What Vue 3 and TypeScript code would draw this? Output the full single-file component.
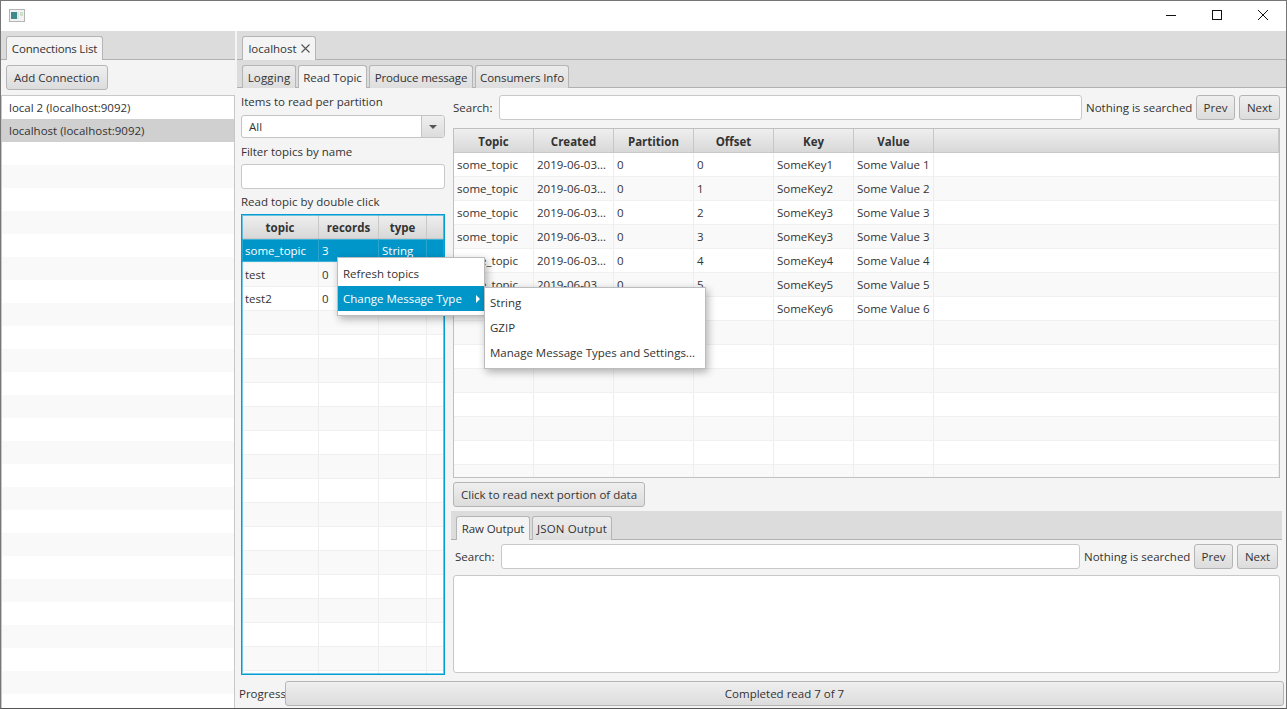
<script setup lang="ts">
interface Row {
  cells: string[]
  selected?: boolean
}

const connections = ['local 2 (localhost:9092)', 'localhost (localhost:9092)']
const emptyConnections = Array.from({ length: 25 }, (_, i) => i)

const topicRows: Row[] = [
  { cells: ['some_topic', '3', 'String', ''], selected: true },
  { cells: ['test', '0', '', ''] },
  { cells: ['test2', '0', '', ''] },
  ...Array.from({ length: 16 }, () => ({ cells: ['', '', '', ''] }))
]

const messages = [
  ['SomeKey1', 'Some Value 1'],
  ['SomeKey2', 'Some Value 2'],
  ['SomeKey3', 'Some Value 3'],
  ['SomeKey3', 'Some Value 3'],
  ['SomeKey4', 'Some Value 4'],
  ['SomeKey5', 'Some Value 5'],
  ['SomeKey6', 'Some Value 6']
]

const messageRows: string[][] = [
  ...messages.map((m, i) => ['some_topic', '2019-06-03...', '0', String(i), m[0], m[1], '']),
  ...Array.from({ length: 7 }, () => ['', '', '', '', '', '', ''])
]

const topicHeaders = ['topic', 'records', 'type', '']
const messageHeaders = ['Topic', 'Created', 'Partition', 'Offset', 'Key', 'Value', '']
const mainTabs = ['Logging', 'Read Topic', 'Produce message', 'Consumers Info']
</script>

<template>
  <div class="window">
    <div class="titlebar">
      <svg class="app-icon" width="16" height="13" viewBox="0 0 16 13">
        <rect x="0.5" y="0.5" width="15" height="12" fill="#f2f2f2" stroke="#b4b4b4" />
        <rect x="2" y="3" width="6" height="7" fill="#3f8a8c" />
        <rect x="8" y="3" width="2" height="7" fill="#dfe6ea" />
        <rect x="11" y="3" width="3" height="4" fill="#cfe0c8" />
      </svg>
      <div class="win-controls">
        <svg width="12" height="12" viewBox="0 0 12 12"><path d="M1 6.5h10" stroke="#111" fill="none" /></svg>
        <svg width="12" height="12" viewBox="0 0 12 12"><rect x="1.5" y="1.5" width="9" height="9" stroke="#111" fill="none" /></svg>
        <svg width="12" height="12" viewBox="0 0 12 12"><path d="M1 1l10 10M11 1L1 11" stroke="#111" fill="none" /></svg>
      </div>
    </div>

    <div class="body">
      <aside class="left-pane">
        <div class="tab-header">
          <div class="tab active conn-tab">Connections List</div>
        </div>
        <div class="left-tools">
          <button class="btn">Add Connection</button>
        </div>
        <div class="conn-list">
          <div
            v-for="(c, i) in connections"
            :key="c"
            class="conn-row"
            :class="{ selected: i === 1 }"
          >{{ c }}</div>
          <div v-for="i in emptyConnections" :key="i" class="conn-row" :class="{ alt: i % 2 === 1 }"></div>
        </div>
      </aside>

      <main class="right-pane">
        <div class="tab-header">
          <div class="tab active closable">
            localhost
            <svg class="close" width="9" height="9" viewBox="0 0 9 9"><path d="M0.5 0.5l8 8M8.5 0.5l-8 8" stroke="#555" stroke-width="1.1" fill="none" /></svg>
          </div>
        </div>
        <div class="tab-header sub">
          <div v-for="t in mainTabs" :key="t" class="tab" :class="{ active: t === 'Read Topic' }">{{ t }}</div>
        </div>

        <div class="content">
          <section class="topics-col">
            <label class="field-label first">Items to read per partition</label>
            <div class="combo">
              <span class="combo-value">All</span>
              <span class="combo-arrow"><i></i></span>
            </div>
            <label class="field-label">Filter topics by name</label>
            <input class="text-input" type="text" />
            <label class="field-label last">Read topic by double click</label>

            <div class="table focused">
              <div class="thead topic-grid">
                <div v-for="(h, i) in topicHeaders" :key="i" class="th">{{ h }}</div>
              </div>
              <div
                v-for="(r, i) in topicRows"
                :key="i"
                class="tr topic-grid"
                :class="{ alt: i % 2 === 1, selected: r.selected }"
              >
                <div v-for="(c, j) in r.cells" :key="j" class="td">{{ c }}</div>
              </div>
            </div>
          </section>

          <section class="messages-col">
            <div class="search-row">
              <span class="search-label">Search:</span>
              <input class="text-input grow" type="text" />
              <span class="search-status">Nothing is searched</span>
              <button class="btn prev">Prev</button>
              <button class="btn next">Next</button>
            </div>

            <div class="table messages">
              <div class="thead message-grid">
                <div v-for="(h, i) in messageHeaders" :key="i" class="th">{{ h }}</div>
              </div>
              <div
                v-for="(r, i) in messageRows"
                :key="i"
                class="tr message-grid"
                :class="{ alt: i % 2 === 1 }"
              >
                <div v-for="(c, j) in r" :key="j" class="td">{{ c }}</div>
              </div>
            </div>

            <div class="read-more">
              <button class="btn">Click to read next portion of data</button>
            </div>

            <div class="tab-header lower">
              <div class="tab active">Raw Output</div>
              <div class="tab">JSON Output</div>
            </div>

            <div class="search-row lower-search">
              <span class="search-label">Search:</span>
              <input class="text-input grow" type="text" />
              <span class="search-status">Nothing is searched</span>
              <button class="btn prev">Prev</button>
              <button class="btn next">Next</button>
            </div>

            <div class="output"></div>
          </section>
        </div>

        <div class="progress-row">
          <span class="progress-label">Progress</span>
          <div class="progress-bar">Completed read 7 of 7</div>
        </div>
      </main>
    </div>

    <div class="menu context-menu">
      <div class="menu-item">Refresh topics</div>
      <div class="menu-item active">Change Message Type<i class="submenu-arrow"></i></div>
    </div>
    <div class="menu sub-menu">
      <div class="menu-item">String</div>
      <div class="menu-item">GZIP</div>
      <div class="menu-item">Manage Message Types and Settings...</div>
    </div>
  </div>
</template>

<style>
html, body { margin: 0; background: #f4f4f4; overflow: hidden; }
</style>

<style scoped>
* { box-sizing: border-box; }
.window { position: relative; width: 1287px; height: 709px; border: 1px solid #767676; border-bottom-color: #555; background: #f4f4f4; font-family: "Open Sans", "Noto Sans", sans-serif; font-size: 11.5px; color: #333; overflow: hidden; display: flex; flex-direction: column; }

.titlebar { height: 30px; flex: none; background: #fff; display: flex; align-items: center; justify-content: space-between; padding: 0 17px 0 8px; }
.app-icon { display: block; margin-top: -2px; }
.win-controls { display: flex; gap: 34px; margin-top: -2px; }
.win-controls svg { display: block; }

.body { flex: 1; display: flex; min-height: 0; }
.left-pane { width: 234px; flex: none; display: flex; flex-direction: column; min-height: 0; }
.right-pane { flex: 1; margin-left: 2px; display: flex; flex-direction: column; min-width: 0; }

.tab-header { height: 29px; flex: none; background: #dcdcdc; border-bottom: 1px solid #b0b0b0; padding: 5px 0 0 5px; display: flex; align-items: flex-end; gap: 2px; }
.tab-header.sub { height: 28px; }
.tab { height: 24px; margin-bottom: -1px; line-height: 23px; text-align: center; border: 1px solid #b5b5b5; border-bottom: none; border-radius: 3px 3px 0 0; background: linear-gradient(#ececec, #dedede); white-space: nowrap; }
.tab.active { background: #f4f4f4; }
.tab-header.sub .tab { height: 23px; }
.conn-tab { width: 97px; letter-spacing: -0.18px; }
.closable { width: 74px; }
.close { margin-left: 1px; }
.tab-header.sub .tab:nth-child(1) { width: 54px; letter-spacing: 0.15px; }
.tab-header.sub .tab:nth-child(2) { width: 69px; }
.tab-header.sub .tab:nth-child(3) { width: 104px; letter-spacing: -0.15px; }
.tab-header.sub .tab:nth-child(4) { width: 94px; letter-spacing: -0.08px; }
.tab-header.lower .tab:nth-child(1) { width: 74px; letter-spacing: -0.1px; }
.tab-header.lower .tab:nth-child(2) { width: 80px; letter-spacing: 0.15px; }

.left-tools { height: 35px; flex: none; padding: 5px 0 0 5px; }
.btn { height: 25px; padding: 0 7px; border: 1px solid #b5b5b5; border-radius: 3px; background: linear-gradient(#efefef, #dcdcdc); font: inherit; color: #333; white-space: nowrap; }
.btn.prev { width: 39px; padding: 0; }
.btn.next { width: 41px; padding: 0; }

.conn-list { flex: 1; min-height: 0; overflow: hidden; border: 1px solid #c8c8c8; border-width: 1px 1px 0; background: #fff; }
.conn-row { height: 23px; line-height: 23px; padding-left: 7px; background: #fff; }
.conn-row.alt { background: #f9f9f9; }
.conn-row.selected { background: #d0d0d0; }

.content { flex: 1; min-height: 0; display: flex; padding-left: 4px; gap: 8px; }
.topics-col { width: 204px; flex: none; display: flex; flex-direction: column; padding-top: 6px; }
.field-label { height: 16px; flex: none; line-height: 16px; margin: 6px 0 4px; }
.field-label.first { margin: 0 0 5px; }
.field-label.last { margin: 5px 0 4px; }

.combo { height: 23px; flex: none; display: flex; border: 1px solid #c4c4c4; border-radius: 3px; background: #fff; }
.combo-value { flex: 1; line-height: 21px; padding-left: 7px; }
.combo-arrow { width: 23px; display: flex; align-items: center; justify-content: center; background: linear-gradient(#efefef, #dcdcdc); border-left: 1px solid #c4c4c4; border-radius: 0 3px 3px 0; }
.combo-arrow i { border: 4px solid transparent; border-top: 4px solid #555; border-bottom: none; }
.text-input { height: 25px; flex: none; border: 1px solid #c8c8c8; border-radius: 3px; background: #fff; outline: none; font: inherit; padding: 0 6px; }
.text-input.grow { flex: 1; min-width: 0; }

.table { background: #fff; overflow: hidden; border: 1px solid #c0c0c0; }
.table.focused { flex: 1; min-height: 0; border-color: #039ed3; outline: 1px solid rgba(3, 158, 211, 0.55); outline-offset: -2px; }
.table.messages { height: 350px; flex: none; margin-top: 8px; }
.thead { height: 24px; background: linear-gradient(#efefef, #d8d8d8); border-bottom: 1px solid #c8c8c8; font-weight: 700; }
.topic-grid { display: grid; grid-template-columns: 77px 60px 48px 1fr; }
.message-grid { display: grid; grid-template-columns: 80px 80px 80px 80px 80px 80px 1fr; }
.th { line-height: 25px; text-align: center; border-right: 1px solid #c8c8c8; white-space: nowrap; }
.tr { height: 24px; background: #fff; border-bottom: 1px solid #f0f0f0; }
.tr.alt { background: #f9f9f9; }
.tr.selected { background: #0096c9; color: #fff; box-shadow: inset 0 0 0 1px #3fb2d8; }
.td { line-height: 23px; padding-left: 3px; border-right: 1px solid #ededed; white-space: nowrap; overflow: hidden; }
.tr.selected .td { border-right-color: #2aa6d1; }

.messages-col { flex: 1; min-width: 0; display: flex; flex-direction: column; padding: 7px 6px 2px 0; }
.search-row { height: 25px; flex: none; display: flex; align-items: center; gap: 4px; }
.search-label { width: 42px; flex: none; }
.search-status { width: 106px; flex: none; white-space: nowrap; }
.read-more { flex: none; margin-top: 4px; height: 25px; }
.tab-header.lower { margin: 4px -2px 0; height: 29px; padding-left: 5px; }
.lower-search { margin-top: 4px; padding-left: 2px; margin-right: 2px; }
.output { flex: 1; margin-top: 6px; background: #fff; border: 1px solid #c8c8c8; border-radius: 3px; }

.progress-row { height: 33px; flex: none; display: flex; align-items: flex-start; padding: 6px 2px 0 2px; }
.progress-label { width: 46px; line-height: 25px; flex: none; }
.progress-bar { flex: 1; height: 25px; line-height: 23px; text-align: center; border: 1px solid #b5b5b5; border-radius: 3px; background: linear-gradient(#efefef, #dcdcdc); }

.menu { position: absolute; background: #fff; border: 1px solid #bcbcbc; box-shadow: 2px 3px 8px rgba(0, 0, 0, 0.3); }
.context-menu { left: 336px; top: 256px; width: 148px; height: 59px; padding-top: 3px; }
.sub-menu { left: 483px; top: 286px; width: 222px; height: 82px; padding-top: 2px; }
.menu-item { position: relative; height: 25px; line-height: 25px; padding-left: 5px; white-space: nowrap; }
.menu-item.active { background: #0096c9; color: #fff; }
.submenu-arrow { position: absolute; right: 4px; top: 9px; border: 4px solid transparent; border-left: 4px solid #fff; border-right: none; }
</style>
